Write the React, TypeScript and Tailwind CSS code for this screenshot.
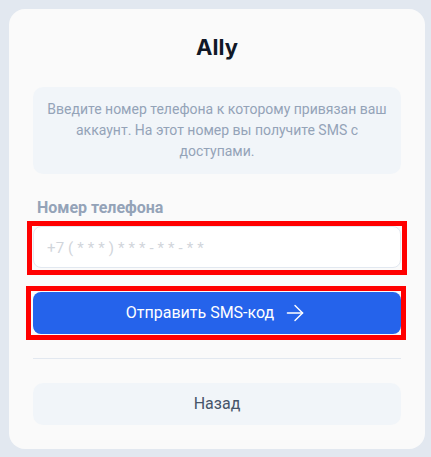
import { ArrowRight } from 'lucide-react';

export default function App() {
  return (
    <div className="min-h-[457px] bg-[#e2e8f0] pt-[9px] pb-2 font-['Roboto',sans-serif]">
      <div className="ml-[9px] flex w-[416px] flex-col rounded-2xl bg-[#fafafa] px-6 pt-[23px] pb-6">
        <h1 className="text-center font-['Inter',sans-serif] text-[22px] font-bold leading-[30px] text-[#111827]">
          Ally
        </h1>

        <div className="mt-[25px] rounded-[10px] bg-[#f1f5f9] px-2 py-3 text-center text-sm leading-[21px] text-[#94a3b8]">
          Введите номер телефона к которому привязан ваш аккаунт. На этот номер вы получите SMS с доступами.
        </div>

        <label className="mt-[24px] px-1 text-base font-bold leading-5 text-[#94a3b8]">
          Номер телефона
        </label>

        {/* highlighted field */}
        <div className="relative mt-[8px]">
          <input
            type="tel"
            placeholder="+7 ( * * * ) * * * - * * - * *"
            className="block h-[42px] w-full rounded-lg border border-[#e2e8f0] bg-white px-[13px] pt-px text-[15px] tracking-[0.01em] text-[#111827] outline-none placeholder:text-[#d1d5db]"
          />
          <span className="pointer-events-none absolute -top-[5px] -right-[6px] -bottom-[7px] -left-[6px] border-[5px] border-[#ff0000]" />
        </div>

        <div className="relative mt-6">
          <button className="flex h-[42px] w-full items-center justify-center gap-2 rounded-lg bg-[#2563eb] text-base text-white">
            Отправить SMS-код
            <ArrowRight size={26} strokeWidth={1.3} />
          </button>
          <span className="pointer-events-none absolute -top-[6px] -right-[5px] -bottom-[6px] -left-[7px] border-[5px] border-[#ff0000]" />
        </div>

        <div className="mt-6 h-px bg-[#e2e8f0]" />

        <button className="mt-6 h-[42px] w-full rounded-[10px] bg-[#f1f5f9] text-base text-[#475569]">
          Назад
        </button>
      </div>
    </div>
  );
}
